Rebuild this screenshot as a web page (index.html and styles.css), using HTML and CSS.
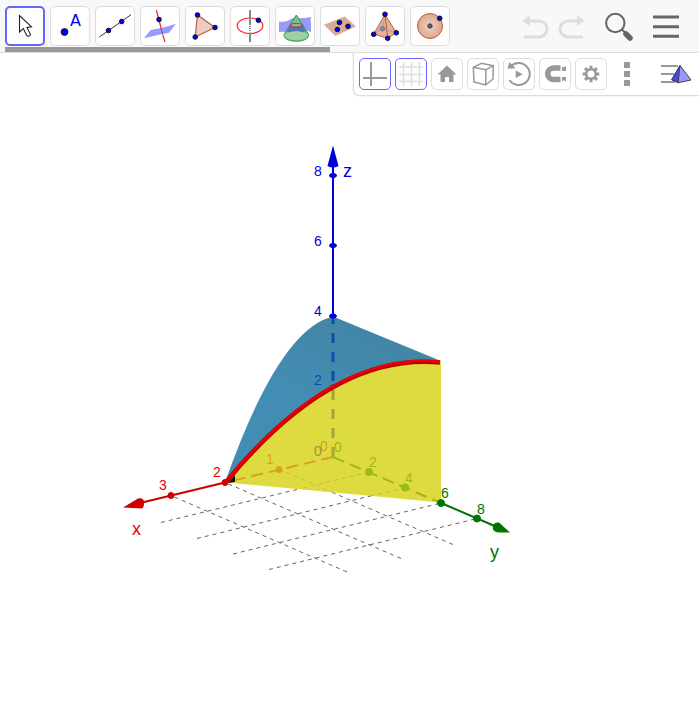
FILE: index.html
```html
<!DOCTYPE html>
<html lang="en">

<head>
    <meta charset="UTF-8">
    <meta name="viewport" content="width=device-width, initial-scale=1.0">
    <title>3D Graphics</title>
    <link rel="stylesheet" href="styles.css">
</head>

<body>
    <header class="toolbar">
        <div class="tools">
            <div class="tool-list">
                <button class="tool active" aria-label="Move">
                    <svg viewBox="0 0 40 40"><path d="M14.5 9.5V26l3.8-3.4 3.6 7.2q2.4 1.2 3.6-1.4l-3.6-7 4.6-.6z" fill="#fff" stroke="#223" stroke-width="1.1"/></svg>
                </button>
                <button class="tool" aria-label="Point">
                    <svg viewBox="0 0 40 40"><circle class="dot" cx="14.5" cy="26" r="3.4"/><text class="tool-letter" x="20" y="20">A</text></svg>
                </button>
                <button class="tool" aria-label="Line">
                    <svg viewBox="0 0 40 40"><path d="M4.3 31L36 8.7" stroke="#333"/><circle class="dot" cx="13.5" cy="24.5" r="2.3"/><circle class="dot" cx="26.7" cy="15.5" r="2.3"/></svg>
                </button>
                <button class="tool" aria-label="Perpendicular line">
                    <svg viewBox="0 0 40 40"><path d="M4 32.3L10.5 24Q23 22 35.8 18L29 26.7Q16 29 4 32.3z" fill="#99f"/><path d="M16.3 4l4.9 18.5M22.8 29L25 36" stroke="#f22" stroke-width="1.2"/><path d="M21.2 22.5l1.6 6.5" stroke="#537" stroke-dasharray="2 1"/><circle class="dot" cx="19" cy="13.5" r="2.3"/></svg>
                </button>
                <button class="tool" aria-label="Polygon">
                    <svg viewBox="0 0 40 40"><path d="M12.5 9L30 21.5 10.2 31z" fill="#eccbc0" stroke="#b5623a" stroke-width="1.2"/><circle class="dot" cx="12.5" cy="9" r="2.3"/><circle class="dot" cx="30" cy="21.5" r="2.3"/><circle class="dot" cx="10.2" cy="31" r="2.3"/></svg>
                </button>
                <button class="tool" aria-label="Circle with axis through point">
                    <svg viewBox="0 0 40 40"><ellipse cx="20" cy="19.8" rx="12.8" ry="7.8" fill="none" stroke="#f22" stroke-width="1.2"/><path d="M20 4v15M20 26.5V36" stroke="#888" stroke-width="2"/><path d="M20 20v6" stroke="#888" stroke-width="2" stroke-dasharray="1 1"/><circle class="dot" cx="28.4" cy="14.3" r="2.3"/></svg>
                </button>
                <button class="tool" aria-label="Intersect two surfaces">
                    <svg viewBox="0 0 40 40"><path d="M4 15.5q8 1 14-3.5 9 1 18-1-1 3 0 6v9q-6-3-13-1-10 1-19 1z" fill="#99f"/><path d="M21.3 9L9 28.5c-1 9 25.6 9 24.6 0z" fill="#7cc08a" stroke="#2d994c"/><path d="M15 19l-4 6.2q10 3 20 0L27.4 19q-6 3-12.4 0z" fill="#5277b8"/><path d="M9.5 28.5q12-7 23.6 0-2 5.5-12 5.5t-11.6-5.5z" fill="#a3cfa6"/><ellipse cx="21.3" cy="19.3" rx="6.2" ry="1.9" fill="none" stroke="#e22"/></svg>
                </button>
                <button class="tool" aria-label="Plane through 3 points">
                    <svg viewBox="0 0 40 40"><path d="M4 18.7L24.7 10.5 36 20.5 15.3 30z" fill="#d8ab98"/><circle class="dot" cx="19.5" cy="16.5" r="2.3"/><circle class="dot" cx="28" cy="20.3" r="2.3"/><circle class="dot" cx="17.4" cy="23.5" r="2.3"/></svg>
                </button>
                <button class="tool" aria-label="Pyramid">
                    <svg viewBox="0 0 40 40"><path d="M20 8.5L8.7 28l14 4.3 8.6-5.5z" fill="#e3b29d" stroke="#b5623a"/><path d="M20 8.5l2.7 23.8" stroke="#b5623a"/><path d="M20 8.5l-2.5 14.2L8.7 28m8.8-5.3l13.8 4.1" fill="none" stroke="#c98668" stroke-width=".7"/><circle cx="17.5" cy="22.7" r="2.2" fill="#858bb0" stroke="#68769a"/><circle class="dot" cx="20" cy="8.3" r="2.3"/><circle class="dot" cx="8.7" cy="28.3" r="2.3"/><circle class="dot" cx="22.7" cy="32.3" r="2.3"/><circle class="dot" cx="31.3" cy="26.8" r="2.3"/></svg>
                </button>
                <button class="tool" aria-label="Sphere">
                    <svg viewBox="0 0 40 40"><defs><radialGradient id="ball"><stop offset="0" stop-color="#f0d2c6"/><stop offset="1" stop-color="#dda58c"/></radialGradient></defs><circle cx="20" cy="20" r="12.5" fill="url(#ball)" stroke="#b5623a"/><circle cx="20" cy="20" r="2.2" fill="#555b87" stroke="#444"/><circle class="dot" cx="29.7" cy="12.3" r="2.3"/></svg>
                </button>
            </div>
            <div class="scroll-thumb"></div>
        </div>
        <div class="actions">
            <button class="action" aria-label="Undo">
                <svg viewBox="0 0 32 32"><path d="M9 11h11a8 8 0 0 1 0 16H5" fill="none" stroke="#ddd" stroke-width="3"/><path d="M3 10.7L11 5.4V16z" fill="#ddd"/></svg>
            </button>
            <button class="action" aria-label="Redo">
                <svg viewBox="0 0 32 32"><path d="M23 11H12a8 8 0 0 0 0 16h15" fill="none" stroke="#ddd" stroke-width="3"/><path d="M29 10.7L21 5.4V16z" fill="#ddd"/></svg>
            </button>
            <button class="action search" aria-label="Search">
                <svg viewBox="0 0 32 32"><circle cx="12.3" cy="13" r="9.2" fill="none" stroke="#666" stroke-width="2"/><path d="M19 19.5l4 4" stroke="#666" stroke-width="2"/><path d="M23 24l4 4" stroke="#666" stroke-width="5.5" stroke-linecap="round"/></svg>
            </button>
            <button class="action menu" aria-label="Menu">
                <svg viewBox="0 0 32 32"><path d="M3 7h26M3 16.7h26M3 26.3h26" stroke="#666" stroke-width="3"/></svg>
            </button>
        </div>
    </header>

    <main class="view">
        <div class="stylebar">
            <button class="style-btn active" aria-label="Show axes">
                <svg viewBox="0 0 32 32"><path d="M12 4v24M4 20h24" stroke="#999" stroke-width="2"/></svg>
            </button>
            <button class="style-btn active" aria-label="Show grid">
                <svg viewBox="0 0 32 32"><path d="M8.5 4v24M16.5 4v24M24.5 4v24M4 9h24M4 16.5h24M4 23.5h24" stroke="#ddd" stroke-width="1.5"/></svg>
            </button>
            <button class="style-btn" aria-label="Standard view">
                <svg viewBox="0 0 32 32"><path d="M16 7.5l9.5 9h-3V24H18v-5h-4v5H9.5v-7.5h-3z" fill="#999"/></svg>
            </button>
            <button class="style-btn" aria-label="Clipping box">
                <svg viewBox="0 0 32 32"><path d="M6.3 9.3l8-4 12 2.4-7.3 4zM6.3 9.3L7 24l11.7 3L26 21l.3-13.3M19 11.7L18.7 27" fill="none" stroke="#999" stroke-width="1.5" stroke-linejoin="round"/></svg>
            </button>
            <button class="style-btn" aria-label="Rotate view">
                <svg viewBox="0 0 32 32"><path d="M8 8.2A11 11 0 1 1 6.5 22" fill="none" stroke="#999" stroke-width="2"/><path d="M4.5 10.5l2-6.5 6 6.5z" fill="#999"/><path d="M12.7 12.5l7 3.7-7 3.7z" fill="#999"/></svg>
            </button>
            <button class="style-btn" aria-label="Point capturing">
                <svg viewBox="0 0 32 32"><path d="M21.5 10h-7a5.7 5.7 0 0 0 0 11.5h7" fill="none" stroke="#999" stroke-width="5.6"/><path d="M23 8.5l1.5 1L27 8v5h-4zM23 19h4v4.5L24.5 22 23 24z" fill="#999"/></svg>
            </button>
            <button class="style-btn" aria-label="Settings">
                <svg viewBox="0 0 32 32"><circle cx="16" cy="16" r="4.8" fill="none" stroke="#999" stroke-width="2.5"/><g stroke="#999" stroke-width="3"><path d="M16 7.7v3.5M16 20.8v3.5M7.7 16h3.5M20.8 16h3.5"/><path d="M10.1 10.1l2.5 2.5M19.4 19.4l2.5 2.5M21.9 10.1l-2.5 2.5M12.6 19.4l-2.5 2.5"/></g></svg>
            </button>
            <button class="style-btn plain" aria-label="More">
                <svg viewBox="0 0 32 32"><path d="M13 4h6v6h-6zM13 13h6v6h-6zM13 22h6v6h-6z" fill="#999"/></svg>
            </button>
            <button class="style-btn plain views" aria-label="Toggle view">
                <svg viewBox="0 0 32 32"><path d="M2 8h17M2 16h13M2 24h14" stroke="#999" stroke-width="2"/><path d="M21 7.5l-8.3 14.2 6.5 3L32 22z" fill="#99f" stroke="#444"/><path d="M21 7.5l-8.3 14.2 6.5 3z" fill="#4646f0" stroke="#444" stroke-linejoin="round"/></svg>
            </button>
        </div>

        <svg class="graph" viewBox="0 53 699 650" preserveAspectRatio="xMinYMin meet" role="img" aria-label="Surface over a triangle in the xy plane">
            <!-- floor grid -->
            <g class="grid">
                <path d="M161 522.5L369 472"/>
                <path d="M197 538.5L405 487.5"/>
                <path d="M233 554L441 503"/>
                <path d="M269 569.5L477 518.5"/>
                <path d="M453 544.5L279 469.5"/>
                <path d="M401 558.5L225 482.5"/>
                <path d="M347 572L171 495.5"/>
            </g>

            <!-- surface and cut plane -->
            <linearGradient id="surface" x1=".4" y1=".5" x2=".7" y2="0">
                <stop offset="0" stop-color="#428db4"/>
                <stop offset="1" stop-color="#4384a3"/>
            </linearGradient>
            <path d="M225 482.5Q279 329 333 316.5L441 361Q333 352 225 482.5z" fill="url(#surface)"/>
            <path d="M226 482.5Q333 352 441 362V502.5z" fill="#dddb3f"/>

            <!-- parts of the axes behind the surfaces -->
            <g class="grid-behind">
                <path d="M369 472L300 488.5"/>
                <path d="M405 487.5L370 496"/>
                <path d="M279 469.5L333 492.5"/>
            </g>
            <path d="M333 314v70" class="hidden-axis" stroke="#0b4fa8"/>
            <path d="M333 390v67" class="hidden-axis" stroke="#a6a337"/>
            <path d="M333 457L231 481" class="hidden-axis slim" stroke="#d8a317"/>
            <path d="M333 457L441 503" class="hidden-axis slim" stroke="#9fba0c"/>
            <circle cx="279" cy="469.5" r="3.5" fill="#d8a317"/>
            <circle cx="369" cy="472" r="4" fill="#9fba0c"/>
            <circle cx="405" cy="487.5" r="4" fill="#9fba0c"/>
            <path d="M329 386q4-3 7-1z" fill="#0b4fa8"/>
            <path d="M228 483l7-8v7z" fill="#112"/>

            <path d="M226 482Q333 352 440 362.5" fill="none" stroke="#c00000" stroke-width="4.5"/>
            <path d="M226 481Q333 351 440 361.5" fill="none" stroke="#f00000" stroke-width="2"/>

            <!-- z axis -->
            <g class="axis-z">
                <path d="M333 316V160" stroke-width="2"/>
                <path d="M333 145.5l5.5 20.5q-5.5 3-11 0z" stroke="none"/>
                <ellipse cx="333" cy="175.5" rx="3.5" ry="2"/>
                <ellipse cx="333" cy="245.5" rx="3.5" ry="2"/>
                <ellipse cx="333" cy="316" rx="3.5" ry="2"/>
            </g>
            <!-- x axis -->
            <g class="axis-x">
                <path d="M225 482.5L140 503" stroke-width="2"/>
                <path d="M123 507.5l15-9q6-1 6 4 0 5-2 6z" stroke="none"/>
                <circle cx="171" cy="495.5" r="3"/>
                <circle cx="225" cy="482.5" r="3"/>
            </g>
            <!-- y axis -->
            <g class="axis-y">
                <path d="M441 503l56 24" stroke-width="2"/>
                <path d="M510 532.5l-11-10q-7-1-6 7 2 3 6 3z" stroke="none"/>
                <circle cx="441" cy="503" r="3.5"/>
                <circle cx="477" cy="518.5" r="3.5"/>
            </g>

            <g class="labels">
                <g fill="#00d">
                    <text x="314" y="176">8</text>
                    <text x="314" y="246">6</text>
                    <text x="314" y="316">4</text>
                    <text x="314" y="385" fill="#0b4fa8">2</text>
                    <text x="343" y="177" class="axis-name">z</text>
                </g>
                <g fill="#e60000">
                    <text x="159" y="490">3</text>
                    <text x="213" y="477">2</text>
                    <text x="266" y="464" fill="#d8a317">1</text>
                    <text x="320" y="451" fill="#d8a317">0</text>
                    <text x="132" y="535" class="axis-name">x</text>
                </g>
                <g fill="#007300">
                    <text x="314" y="456" fill="#98953f">0</text>
                    <text x="334" y="452" fill="#9fba0c">0</text>
                    <text x="369" y="467" fill="#9fba0c">2</text>
                    <text x="405" y="483" fill="#9fba0c">4</text>
                    <text x="441" y="498">6</text>
                    <text x="477" y="514">8</text>
                    <text x="490" y="558" class="axis-name">y</text>
                </g>
            </g>
        </svg>
    </main>
</body>

</html>
```

FILE: styles.css
```css
* {
    box-sizing: border-box;
}

body {
    margin: 0;
    height: 100vh;
    padding-right: 1px;
    display: flex;
    flex-direction: column;
    background-color: #fff;
    font-family: "Liberation Sans", Arial, sans-serif;
}

button {
    display: flex;
    align-items: center;
    justify-content: center;
    flex-shrink: 0;
    margin: 0;
    padding: 0;
    border: none;
    background: none;
    cursor: pointer;
}

button svg {
    flex-shrink: 0;
    fill: none;
}

/* Top toolbar */
.toolbar {
    display: flex;
    justify-content: space-between;
    background-color: #f8f8f8;
    border-bottom: 1px solid #ddd;
}

.tools {
    padding: 6px 0 0 5px;
}

.tool-list {
    display: flex;
    gap: 5px;
}

.tool {
    width: 40px;
    height: 40px;
    background-color: #fff;
    border: 1px solid #ddd;
    border-radius: 5px;
}

.tool.active {
    border: 2px solid #66f;
}

.tool svg {
    width: 40px;
    height: 40px;
}

.dot {
    fill: #00f;
    stroke: #111;
    stroke-width: 1px;
}

.tool-letter {
    fill: #00f;
    font: 16px "DejaVu Sans", sans-serif;
}

.scroll-thumb {
    width: 73%;
    height: 5px;
    margin-top: 1px;
    background-color: #999;
}

.actions {
    display: flex;
    align-items: center;
    gap: 5px;
    padding-right: 17px;
}

.action svg {
    display: block;
    width: 32px;
    height: 32px;
}

.search,
.menu {
    margin-left: 10px;
}

/* Graphics view */
.view {
    position: relative;
    flex: 1;
    min-height: 0;
}

.graph {
    display: block;
    width: 100%;
    height: 100%;
}

/* Style bar lies over the graphics */
.stylebar {
    position: absolute;
    top: 0;
    right: 0;
    display: flex;
    gap: 4px;
    padding: 5px 8px 5px 5px;
    background-color: #fff;
    border-left: 1px solid #ddd;
    border-bottom: 1px solid #ddd;
    border-bottom-left-radius: 6px;
    box-shadow: 0 0 2px #ddd;
    clip-path: inset(0 0 -3px -3px);
}

.style-btn {
    width: 32px;
    height: 32px;
    border: 1px solid #ddd;
    border-radius: 5px;
}

.style-btn.active {
    border-color: #66f;
}

.style-btn.plain {
    border: none;
}

.style-btn svg {
    width: 32px;
    height: 32px;
}

.views {
    margin-left: 12px;
}

/* Plot */
.grid path {
    stroke: #666;
    stroke-dasharray: 4 4;
}

.grid-behind path {
    stroke: #c2c336;
    stroke-dasharray: 4 4;
}

.hidden-axis {
    stroke-width: 3px;
    stroke-dasharray: 10 9;
}

.hidden-axis.slim {
    stroke-width: 2px;
    stroke-dasharray: 12 6;
}

.axis-z {
    fill: #00d;
    stroke: #00d;
}

.axis-x {
    fill: #d00000;
    stroke: #d00000;
}

.axis-y {
    fill: #007300;
    stroke: #007300;
}

.labels {
    font-size: 14px;
}

.axis-name {
    font-size: 18px;
}
```
